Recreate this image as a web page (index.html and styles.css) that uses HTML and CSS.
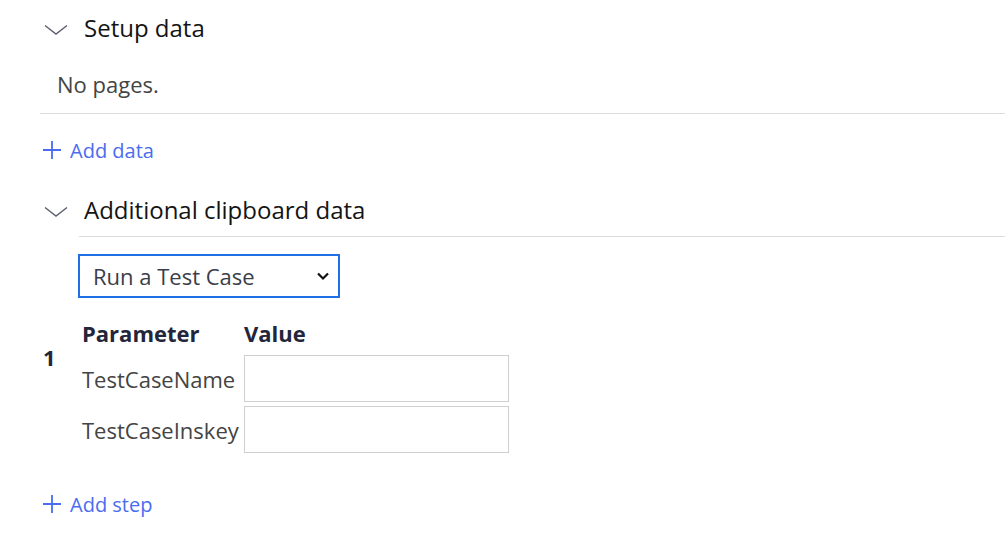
FILE: index.html
```html
<!DOCTYPE html>
<html>
<head>
<meta charset="utf-8">
<link rel="stylesheet" href="styles.css">
</head>
<body>
<div class="page">
  <div class="head">
    <svg class="chev" width="28" height="12" viewBox="0 0 28 12"><path d="M3 1.5 L14 10 L25 1.5" fill="none" stroke="#5f6170" stroke-width="1.5"/></svg>
    <span class="title">Setup data</span>
  </div>
  <div class="empty">No pages.</div>
  <div class="link link-data">
    <svg class="plus" width="20" height="20" viewBox="0 0 20 20"><path d="M10 1 V19 M1 10 H19" stroke="#4a6cf0" stroke-width="1.8" fill="none"/></svg>
    <span>Add data</span>
  </div>
  <div class="head head2">
    <svg class="chev" width="28" height="12" viewBox="0 0 28 12"><path d="M3 1.5 L14 10 L25 1.5" fill="none" stroke="#5f6170" stroke-width="1.5"/></svg>
    <span class="title">Additional clipboard data</span>
  </div>
  <div class="sub">
    <div class="select">
      <span>Run a Test Case</span>
      <svg width="14" height="10" viewBox="0 0 14 10"><path d="M2 2.5 L7 7.5 L12 2.5" fill="none" stroke="#111" stroke-width="2.2"/></svg>
    </div>
  </div>
  <div class="steps">
    <div class="th th-param">Parameter</div>
    <div class="th">Value</div>
    <div class="num">1</div>
    <div class="label first">TestCaseName</div>
    <div class="cell first"><div class="input"></div></div>
    <div class="label">TestCaseInskey</div>
    <div class="cell"><div class="input"></div></div>
  </div>
  <div class="link link-step">
    <svg class="plus" width="20" height="20" viewBox="0 0 20 20"><path d="M10 1 V19 M1 10 H19" stroke="#4a6cf0" stroke-width="1.8" fill="none"/></svg>
    <span>Add step</span>
  </div>
</div>
</body>
</html>
```
FILE: styles.css
```css
html, body {
  margin: 0;
  padding: 0;
  background: #ffffff;
}
body {
  font-family: "Open Sans", "Noto Sans", sans-serif;
  color: #2b2b2b;
}
.page {
  padding: 9px 0 0 40px;
}
.head {
  display: flex;
  align-items: center;
  height: 40px;
}
.chev {
  margin-left: 2px;
  margin-top: 2px;
}
.title {
  margin-left: 14px;
  margin-bottom: 4px;
  font-size: 24px;
  font-weight: 500;
  color: #141414;
}
.empty {
  padding: 22px 0 16px 17px;
  line-height: 26px;
  font-size: 22px;
  color: #444;
  border-bottom: 1px solid #dcdcdc;
}
.link {
  display: flex;
  align-items: center;
  height: 26px;
  color: #4a6cf0;
  font-size: 20px;
}
.plus {
  margin-left: 2px;
  margin-right: 8px;
}
.link-data {
  margin-top: 23px;
}
.head2 {
  margin-top: 28px;
}
.sub {
  margin-top: 5px;
  margin-left: 39px;
  border-top: 1px solid #dcdcdc;
  padding-top: 17px;
}
.select {
  display: flex;
  align-items: center;
  justify-content: space-between;
  box-sizing: border-box;
  width: 262px;
  height: 44px;
  margin-left: -1px;
  border: 2px solid #1f6fe5;
  padding: 0 8px 0 13px;
  font-size: 22px;
  color: #3a3d4a;
}
.steps {
  display: grid;
  grid-template-columns: 42px 162px 265px;
  margin-top: 23px;
}
.th {
  font-weight: 700;
  font-size: 22px;
  line-height: 24px;
  color: #23263a;
}
.th-param {
  grid-column: 2;
}
.num {
  grid-column: 1;
  grid-row: 2;
  font-weight: 700;
  font-size: 22px;
  line-height: 24px;
  padding-left: 3px;
  color: #23263a;
}
.label {
  grid-column: 2;
  display: flex;
  align-items: center;
  font-size: 22px;
  color: #444;
  padding-top: 4px;
}
.label.first {
  grid-row: 2;
  padding-top: 10px;
}
.cell {
  grid-column: 3;
  padding-top: 4px;
}
.cell.first {
  grid-row: 2;
  padding-top: 10px;
}
.input {
  box-sizing: border-box;
  height: 47px;
  border: 1px solid #cfcfcf;
  background: #fff;
}
.link-step {
  margin-top: 38px;
}
```
